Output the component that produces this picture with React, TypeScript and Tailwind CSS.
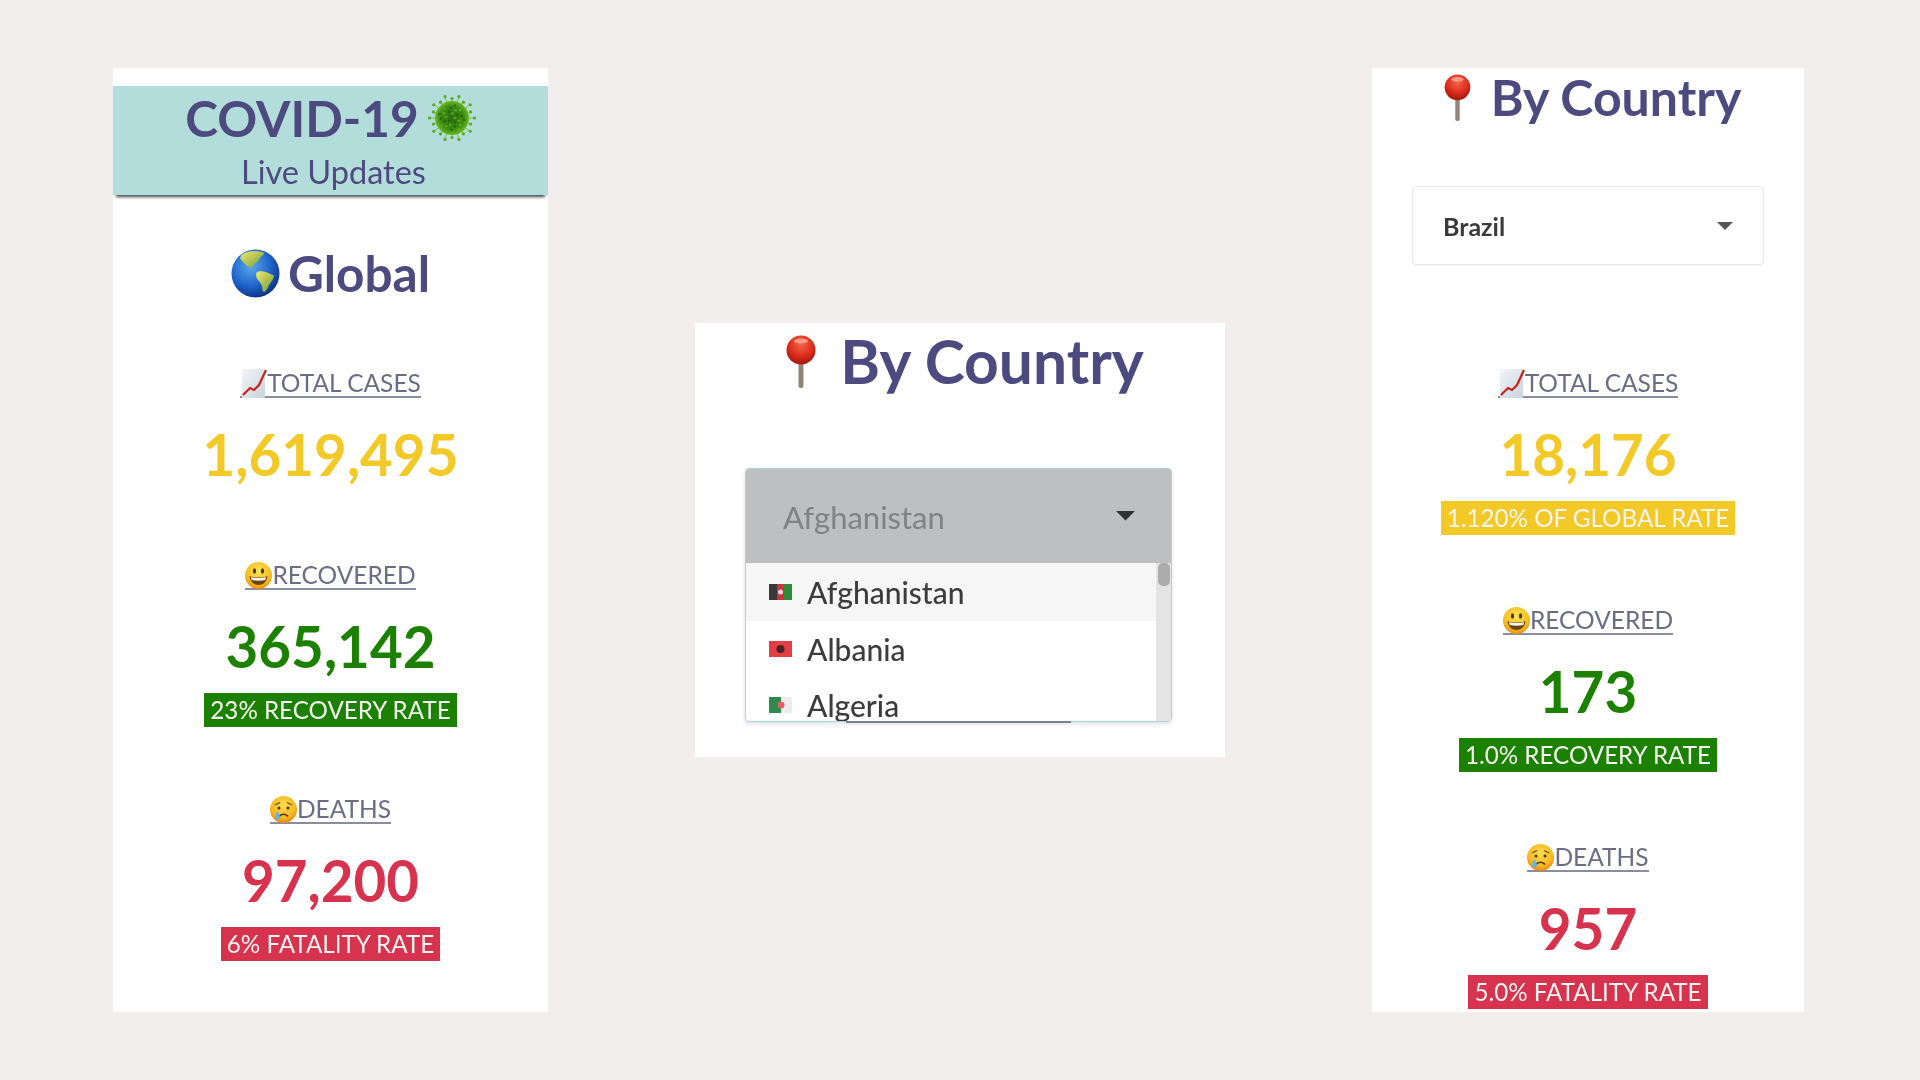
import type { ReactNode } from "react";

const lato = "font-['Lato','Liberation_Sans',sans-serif]";

function GlobeIcon() {
  return (
    <svg width="49" height="49" viewBox="0 0 48 48" className="shrink-0">
      <defs>
        <radialGradient id="sea" cx="40%" cy="35%" r="70%">
          <stop offset="0%" stopColor="#5aa8f0" />
          <stop offset="60%" stopColor="#1f62c8" />
          <stop offset="100%" stopColor="#0c2f80" />
        </radialGradient>
        <linearGradient id="land" x1="0" y1="0" x2="1" y2="1">
          <stop offset="0%" stopColor="#f2ea70" />
          <stop offset="100%" stopColor="#6f9a35" />
        </linearGradient>
      </defs>
      <circle cx="24" cy="24" r="23.5" fill="url(#sea)" />
      <path d="M10 6 C16 1 27 1 33 4 C31 7 28 8 27 11 C25 14 23 13 22 16 C20 20 17 18 14 15 C12 13 10 11 9 9 Z" fill="url(#land)" />
      <path d="M25 23 C29 20 36 23 42 26 C42 30 38 33 36 38 C34 42 32 43 31 41 C31 36 29 33 27 31 C25 29 24 26 25 23 Z" fill="url(#land)" />
    </svg>
  );
}

function VirusIcon() {
  const spikes = Array.from({ length: 20 }, (_, i) => (i * Math.PI * 2) / 20);
  const specks = Array.from({ length: 26 }, (_, i) => {
    const a = i * 2.4;
    const r = 2.6 * Math.sqrt(i + 1);
    return { x: 24 + Math.cos(a) * r, y: 25 + Math.sin(a) * r };
  });
  return (
    <svg width="48" height="50" viewBox="0 0 48 50" className="shrink-0">
      <defs>
        <radialGradient id="virus" cx="50%" cy="50%" r="50%">
          <stop offset="0%" stopColor="#2a6e10" />
          <stop offset="70%" stopColor="#3d8f12" />
          <stop offset="100%" stopColor="#6cb81f" />
        </radialGradient>
      </defs>
      {spikes.map((a, i) => {
        const r = i % 2 ? 19.5 : 22.5;
        const x = 24 + Math.cos(a) * r;
        const y = 25 + Math.sin(a) * r;
        return (
          <g key={i}>
            <line x1="24" y1="25" x2={x} y2={y} stroke="#7cc234" strokeWidth="1" />
            <circle cx={x} cy={y} r="1.6" fill="#5da822" />
          </g>
        );
      })}
      <circle cx="24" cy="25" r="17" fill="url(#virus)" />
      {specks.map((s, i) => (
        <circle key={i} cx={s.x} cy={s.y} r="1.2" fill={i % 2 ? "#1e5a0c" : "#69b32a"} opacity="0.8" />
      ))}
    </svg>
  );
}

function PinIcon({ w, h }: { w: number; h: number }) {
  return (
    <svg width={w} height={h} viewBox="0 0 30 53" className="shrink-0">
      <defs>
        <radialGradient id="pin" cx="50%" cy="30%" r="65%">
          <stop offset="0%" stopColor="#f4664a" />
          <stop offset="65%" stopColor="#dc2c1c" />
          <stop offset="100%" stopColor="#a81a10" />
        </radialGradient>
      </defs>
      <rect x="12.5" y="26" width="5" height="27" rx="2" fill="#8f8678" />
      <circle cx="15" cy="15" r="14.5" fill="url(#pin)" />
      <ellipse cx="15" cy="6" rx="7" ry="2.5" fill="#ffb9a4" opacity="0.7" />
    </svg>
  );
}

function ChartIcon() {
  return (
    <svg width="27" height="29" viewBox="0 0 27 29" className="shrink-0">
      <defs>
        <linearGradient id="paper" x1="0" y1="0" x2="1" y2="1">
          <stop offset="0%" stopColor="#f2f5f8" />
          <stop offset="100%" stopColor="#c8d3dd" />
        </linearGradient>
      </defs>
      <rect x="2" y="0" width="23" height="29" fill="url(#paper)" />
      <path d="M3 26 L10 19 L14 21 L19 16 L26 1" fill="none" stroke="#c9221a" strokeWidth="2.2" />
    </svg>
  );
}

function SmileIcon() {
  return (
    <svg width="27" height="27" viewBox="0 0 27 27" className="shrink-0">
      <defs>
        <radialGradient id="smile" cx="50%" cy="35%" r="65%">
          <stop offset="0%" stopColor="#fbe25a" />
          <stop offset="70%" stopColor="#f5c020" />
          <stop offset="100%" stopColor="#e8900c" />
        </radialGradient>
      </defs>
      <circle cx="13.5" cy="13.5" r="13.5" fill="url(#smile)" />
      <ellipse cx="9.5" cy="9" rx="1.6" ry="2.8" fill="#4d3414" />
      <ellipse cx="17.5" cy="9" rx="1.6" ry="2.8" fill="#4d3414" />
      <path d="M4.5 14 C9 16 18 16 22.5 14 C22 20 18 23 13.5 23 C9 23 5 20 4.5 14 Z" fill="#6e4316" />
      <path d="M6 15 C10 16.4 17 16.4 21 15 L20.4 18 C16 19 11 19 6.6 18 Z" fill="#f6f3ea" />
    </svg>
  );
}

function CryIcon() {
  return (
    <svg width="27" height="27" viewBox="0 0 27 27" className="shrink-0">
      <defs>
        <radialGradient id="cry" cx="50%" cy="35%" r="65%">
          <stop offset="0%" stopColor="#fbdc50" />
          <stop offset="70%" stopColor="#f5b820" />
          <stop offset="100%" stopColor="#e8860c" />
        </radialGradient>
      </defs>
      <circle cx="13.5" cy="13.5" r="13.5" fill="url(#cry)" />
      <path d="M5 9 L10 6.5 M22 9 L17 6.5" stroke="#6e4a16" strokeWidth="1.3" fill="none" />
      <circle cx="9" cy="12" r="1.5" fill="#4d3414" />
      <circle cx="18" cy="12" r="1.5" fill="#4d3414" />
      <path d="M9 20.5 C11 17.5 16 17.5 18 20.5" stroke="#4d3414" strokeWidth="1.6" fill="none" />
      <path d="M7.5 15 C9.5 19 10 20 10 21.5 A2.6 2.6 0 0 1 5 21.5 C5 20 5.8 18 7.5 15 Z" fill="#5cb8ea" />
    </svg>
  );
}

function Caret({ className }: { className: string }) {
  return (
    <svg viewBox="0 0 16 8" className={className}>
      <path d="M0 0 H16 L8 8 Z" fill="currentColor" />
    </svg>
  );
}

function Stat({
  icon,
  label,
  value,
  color,
  badge,
  badgeBg,
  className,
}: {
  icon: ReactNode;
  label: string;
  value: string;
  color: string;
  badge?: string;
  badgeBg?: string;
  className: string;
}) {
  return (
    <div className={`flex flex-col items-center ${className}`}>
      <div className="inline-flex h-[28px] items-center border-b-2 border-[#8c8ca0] text-[24.5px] leading-[26px] text-[#6c6c84]">
        {icon}
        <span>{label}</span>
      </div>
      <div className={`mt-[21px] text-[56.5px] font-bold leading-[70px] ${color}`}>{value}</div>
      {badge && (
        <div className={`mt-[12px] h-[34px] px-[6px] text-[24.2px] leading-[34px] text-[#f4f4f0] ${badgeBg}`}>{badge}</div>
      )}
    </div>
  );
}

function AfghanistanFlag() {
  return (
    <svg width="25" height="16" viewBox="0 0 23 16" className="shrink-0">
      <rect width="8" height="16" fill="#3a3a3a" />
      <rect x="8" width="7" height="16" fill="#c8353f" />
      <rect x="15" width="8" height="16" fill="#2f8a3c" />
      <circle cx="11.5" cy="8" r="2.5" fill="#f0d8d8" />
    </svg>
  );
}

function AlbaniaFlag() {
  return (
    <svg width="25" height="16" viewBox="0 0 23 16" className="shrink-0">
      <rect width="23" height="16" fill="#e23e44" />
      <circle cx="11.5" cy="8" r="4" fill="#4a2226" />
    </svg>
  );
}

function AlgeriaFlag() {
  return (
    <svg width="25" height="16" viewBox="0 0 23 16" className="shrink-0">
      <rect width="12" height="16" fill="#2f8a4c" />
      <rect x="12" width="11" height="16" fill="#ececec" />
      <circle cx="12" cy="8" r="3.5" fill="#e0606a" />
    </svg>
  );
}

const countries = [
  { name: "Afghanistan", flag: <AfghanistanFlag />, rowClass: "h-[58px] bg-[#f6f6f6]" },
  { name: "Albania", flag: <AlbaniaFlag />, rowClass: "h-[56px]" },
  { name: "Algeria", flag: <AlgeriaFlag />, rowClass: "h-[56px]" },
];

export default function App() {
  return (
    <div className={`flex h-screen w-full items-center bg-[#f2eeee] pl-[113px] blur-[0.5px] ${lato}`}>
      {/* Global */}
      <section className="h-[944px] w-[435px] shrink-0 bg-white pt-[18px]">
        <header className="flex h-[109px] flex-col items-center bg-[#b3dddb] pt-[2px] text-[#4c4a7e] shadow-[0_5px_3px_-3px_#444]">
          <div className="flex h-[60px] items-center gap-[9px] text-[49.5px] font-bold leading-[60px]">
            COVID-19
            <VirusIcon />
          </div>
          <div className="ml-[6px] mt-[6px] text-[32.5px] leading-[36px]">Live Updates</div>
        </header>
        <h2 className="mt-[48px] flex h-[60px] items-center justify-center gap-[8px] text-[49.5px] font-bold leading-[60px] text-[#4c4a7e]">
          <GlobeIcon />
          Global
        </h2>
        <Stat className="mt-[67px]" icon={<ChartIcon />} label="TOTAL CASES" value="1,619,495" color="text-[#f2c926]" />
        <Stat className="mt-[73px]" icon={<SmileIcon />} label="RECOVERED" value="365,142" color="text-[#1c8000]" badge="23% RECOVERY RATE" badgeBg="bg-[#1c8000]" />
        <Stat className="mt-[69px]" icon={<CryIcon />} label="DEATHS" value="97,200" color="text-[#d7324e]" badge="6% FATALITY RATE" badgeBg="bg-[#d7324e]" />
      </section>

      {/* Dropdown open */}
      <section className="ml-[147px] h-[434px] w-[530px] shrink-0 bg-white pt-[6px]">
        <h2 className="ml-[10px] flex h-[64px] items-center justify-center gap-[24px] text-[60.5px] font-bold leading-[64px] text-[#4c4a7e]">
          <PinIcon w={30} h={53} />
          By Country
        </h2>
        <div className="relative ml-[50px] mt-[75px] h-[254px] w-[427px] rounded-[4px] border border-[#a9d3df] bg-white shadow-[0_2px_4px_rgba(0,0,0,0.12)]">
          <div className="flex h-[94px] items-center justify-between rounded-t-[3px] bg-[#bdbfc1] pl-[37px] pr-[36px] pt-[2px] text-[31px] text-[#808285]">
            <span>Afghanistan</span>
            <Caret className="mb-[2px] w-[19px] text-[#333]" />
          </div>
          <div className="flex h-[158px] overflow-hidden">
            <ul className="flex-1 text-[30px] font-medium text-[#3c3c3c]">
              {countries.map((c) => (
                <li key={c.name} className={`flex items-center gap-[14px] pl-[22px] ${c.rowClass}`}>
                  {c.flag}
                  {c.name}
                </li>
              ))}
            </ul>
            <div className="w-[15px] bg-[#e4e4e4]">
              <div className="mx-auto h-[23px] w-[12px] rounded-[5px] bg-[#acacac]" />
            </div>
          </div>
          <div className="absolute bottom-[-2px] left-[100px] h-[2px] w-[225px] bg-[#76838f]" />
        </div>
      </section>

      {/* Selected country */}
      <section className="ml-[147px] h-[944px] w-[432px] shrink-0 bg-white pt-px">
        <h2 className="ml-[9px] flex h-[56px] items-center justify-center gap-[20px] text-[50px] font-bold leading-[56px] text-[#4c4a7e]">
          <PinIcon w={27} h={47} />
          By Country
        </h2>
        <div className="ml-[40px] mt-[61px] flex h-[79px] w-[352px] items-center justify-between rounded-[4px] border border-[#e8e8e8] pl-[30px] pr-[30px] pt-[2px] text-[25px] font-bold text-[#3a3a3a] shadow-[0_1px_2px_rgba(0,0,0,0.06)]">
          <span>Brazil</span>
          <Caret className="mb-[1px] w-[16px] text-[#555]" />
        </div>
        <Stat className="mt-[105px]" icon={<ChartIcon />} label="TOTAL CASES" value="18,176" color="text-[#f2c926]" badge="1.120% OF GLOBAL RATE" badgeBg="bg-[#f2c926]" />
        <Stat className="mt-[72px]" icon={<SmileIcon />} label="RECOVERED" value="173" color="text-[#1c8000]" badge="1.0% RECOVERY RATE" badgeBg="bg-[#1c8000]" />
        <Stat className="mt-[72px]" icon={<CryIcon />} label="DEATHS" value="957" color="text-[#d7324e]" badge="5.0% FATALITY RATE" badgeBg="bg-[#d7324e]" />
      </section>
    </div>
  );
}
